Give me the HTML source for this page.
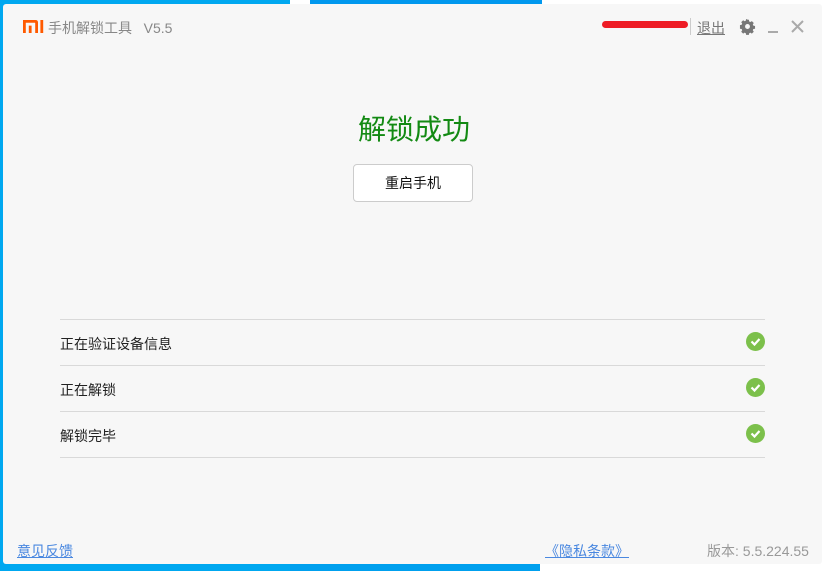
<!DOCTYPE html>
<html><head><meta charset="utf-8"><style>
html,body{margin:0;padding:0;width:828px;height:571px;overflow:hidden;background:#fff;font-family:"Liberation Sans","Noto Sans CJK SC",sans-serif;position:relative}
.abs{position:absolute}
.win{left:3px;top:4px;width:819px;height:560px;background:#f7f7f7;border-radius:3px}
.line{position:absolute;left:60px;width:705px;height:1px;background:#d9d9d9}
.row{position:absolute;left:60px;font-size:14px;color:#222}
.chk{position:absolute;left:746px;width:19px;height:19px;border-radius:50%;background:#7cc04b}
</style></head><body>
<div class="abs" style="left:0;top:0;width:290px;height:571px;background:#00a8f0"></div>
<div class="abs" style="left:310px;top:0;width:232px;height:5px;background:#0098ee"></div>
<div class="abs" style="left:290px;top:564px;width:250px;height:7px;background:#00a0ee"></div>
<div class="abs win"></div>
<svg class="abs" style="left:23px;top:20px" width="21" height="13" viewBox="0 0 21 13"><path d="M0 0H12.5Q15 0 15 2.5V13H12.2V3.2Q12.2 2.8 11.8 2.8H2.8V13H0Z M5.8 5.6H8.6V13H5.8Z M17.4 0H20.2V13H17.4Z" fill="#ff5a00"/></svg>
<div class="abs" style="left:48px;top:18px;font-size:14px;color:#888">手机解锁工具&nbsp;&nbsp; V5.5</div>
<div class="abs" style="left:602px;top:21px;width:86px;height:7px;border-radius:4px;background:#ee1c25"></div>
<div class="abs" style="left:690px;top:18px;width:1px;height:17px;background:#ccc"></div>
<div class="abs" style="left:697px;top:18px;font-size:14px;color:#777;text-decoration:underline">退出</div>
<svg class="abs" style="left:739px;top:18px" width="17" height="17" viewBox="0 0 16 16"><path d="M8 1.5l1.3.2.3 1.6 1.1.5 1.4-.9 1.8 1.8-.9 1.4.5 1.1 1.6.3v2.6l-1.6.3-.5 1.1.9 1.4-1.8 1.8-1.4-.9-1.1.5-.3 1.6H6.7l-.3-1.6-1.1-.5-1.4.9-1.8-1.8.9-1.4-.5-1.1-1.6-.3V6.7l1.6-.3.5-1.1-.9-1.4 1.8-1.8 1.4.9 1.1-.5.3-1.6z" fill="#777"/><circle cx="8" cy="8" r="2.3" fill="#f7f7f7"/></svg>
<div class="abs" style="left:768px;top:31px;width:10px;height:2px;background:#aaa"></div>
<svg class="abs" style="left:791px;top:20px" width="13" height="13"><path d="M1 1L12 12M12 1L1 12" stroke="#aaa" stroke-width="2"/></svg>
<div class="abs" style="left:0;top:108px;width:828px;text-align:center;font-size:28px;color:#138a13">解锁成功</div>
<div class="abs" style="left:353px;top:164px;width:118px;height:36px;border:1px solid #ccc;border-radius:4px;background:#fff;text-align:center;line-height:36px;font-size:14px;color:#111">重启手机</div>
<div class="line" style="top:319px"></div>
<div class="line" style="top:365px"></div>
<div class="line" style="top:411px"></div>
<div class="line" style="top:457px"></div>
<div class="row" style="top:334px">正在验证设备信息</div>
<div class="row" style="top:380px">正在解锁</div>
<div class="row" style="top:426px">解锁完毕</div>
<div class="chk" style="top:332px"><svg width="19" height="19"><path d="M5.5 9.5l3 3 5-5.5" stroke="#fff" stroke-width="2.2" fill="none"/></svg></div>
<div class="chk" style="top:378px"><svg width="19" height="19"><path d="M5.5 9.5l3 3 5-5.5" stroke="#fff" stroke-width="2.2" fill="none"/></svg></div>
<div class="chk" style="top:424px"><svg width="19" height="19"><path d="M5.5 9.5l3 3 5-5.5" stroke="#fff" stroke-width="2.2" fill="none"/></svg></div>
<div class="abs" style="left:17px;top:541px;font-size:14px;color:#4a88e0;text-decoration:underline">意见反馈</div>
<div class="abs" style="left:545px;top:541px;font-size:14px;color:#4a88e0;text-decoration:underline">《隐私条款》</div>
<div class="abs" style="left:707px;top:541px;font-size:14px;color:#999">版本: 5.5.224.55</div>
</body></html>
